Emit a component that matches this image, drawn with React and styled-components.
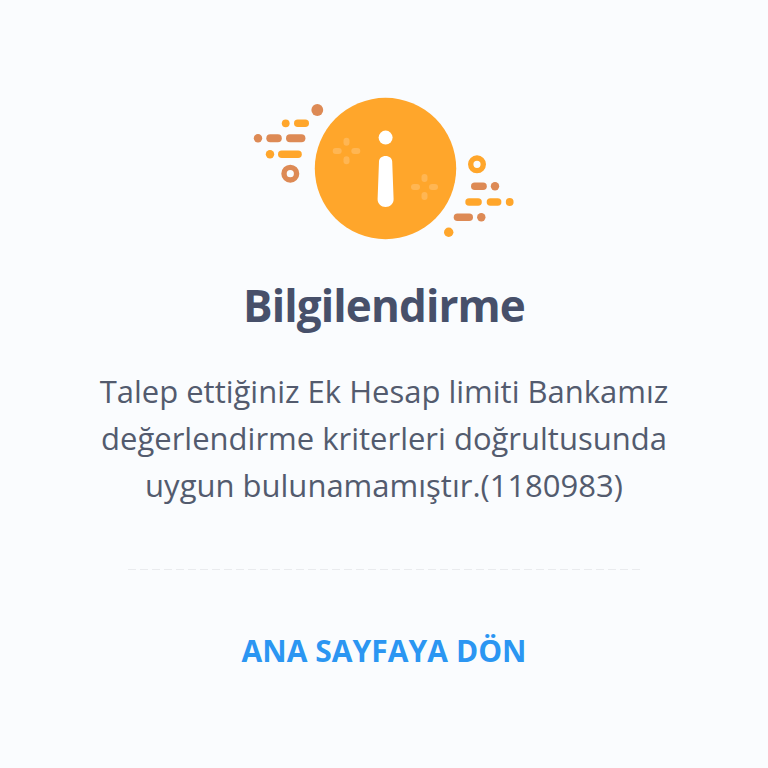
import React from "react";
import styled, { createGlobalStyle } from "styled-components";

const Global = createGlobalStyle`
  html, body { margin: 0; padding: 0; background: #fafcfe; }
  body { font-family: "Open Sans", "Liberation Sans", sans-serif; }
`;
const Page = styled.main`
  width: 768px; height: 768px; overflow: hidden; background: #fafcfe;
  display: flex; flex-direction: column; align-items: center; padding-top: 90px; box-sizing: border-box;
`;
const Illustration = styled.svg`
  display: block; width: 290px; height: 160px; margin-left: 2px; flex: none;
`;
const Title = styled.h1`
  margin: 26px 0 0; font-size: 44px; line-height: 58px; font-weight: 700; letter-spacing: -0.9px; color: #47506a;
`;
const Message = styled.p`
  margin: 34px 0 0; width: 620px; font-size: 31px; line-height: 47px; font-weight: 400; color: #535b6e; text-align: center;
`;
const Divider = styled.hr`
  width: 512px; height: 1px; margin: 60px 0 0; border: 0;
  background: repeating-linear-gradient(to right, #e9ebee 0 8px, transparent 8px 12px);
`;
const Action = styled.button`
  margin-top: 58px; padding: 0; border: 0; background: none; font: 700 30px/46px "Open Sans", sans-serif; color: #2b96f2; letter-spacing: 0.05px;
`;

const BROWN = "#dd8a55", ORANGE = "#ffa62b", SOFT = "#ffb653";
const Pill = ({ x1, x2, y, h = 7.5, c }) => <rect x={x1 - 240} y={y - 90 - h / 2} width={x2 - x1} height={h} rx={h / 2} fill={c} />;
const Dot = ({ x, y, r = 4, c }) => <circle cx={x - 240} cy={y - 90} r={r} fill={c} />;
const Ring = ({ x, y, c }) => <circle cx={x - 240} cy={y - 90} r={6.3} fill="none" stroke={c} strokeWidth={5.4} />;
const Sparkle = ({ x, y, off }) => (
  <g fill={SOFT}>
    <rect x={x - 240 - 3} y={y - 90 - off - 4} width={6} height={8} rx={3} />
    <rect x={x - 240 - 3} y={y - 90 + off - 4} width={6} height={8} rx={3} />
    <rect x={x - 240 - off - 4.5} y={y - 90 - 3} width={9} height={6} rx={3} />
    <rect x={x - 240 + off - 4.5} y={y - 90 - 3} width={9} height={6} rx={3} />
  </g>
);

export default function App() {
  return (
    <Page>
      <Global />
      <Illustration viewBox="0 0 290 160" aria-hidden="true">
        <circle cx="145.5" cy="78.5" r="70.7" fill={ORANGE} />
        <Sparkle x={346.5} y={151} off={9.3} />
        <Sparkle x={424.5} y={187} off={9} />
        <circle cx="145.6" cy="47.6" r="7" fill="#fff" />
        <path d="M145.6 66 c3.8 0 6.4 2.4 6.6 5.4 l1.4 37.6 c0.2 4.6 -3.6 8 -8 8 s-8.2 -3.4 -8 -8 l1.4 -37.6 c0.2 -3 2.8 -5.4 6.6 -5.4z" fill="#fff" />

        <Dot x={317.3} y={110} r={5.9} c={BROWN} />
        <Dot x={285.7} y={123.3} r={3.9} c={ORANGE} />
        <Pill x1={294} x2={309} y={123.3} c={ORANGE} />
        <Dot x={258} y={138.3} r={4.2} c={BROWN} />
        <Pill x1={266.3} x2={281.8} y={138.3} h={8} c={BROWN} />
        <Pill x1={286} x2={305.4} y={138.3} h={8} c={BROWN} />
        <Dot x={270} y={154.3} r={4.2} c={ORANGE} />
        <Pill x1={278} x2={301.8} y={154.3} c={ORANGE} />
        <Ring x={290.3} y={173.7} c={BROWN} />

        <Ring x={477} y={164.3} c={ORANGE} />
        <Pill x1={471} x2={486.8} y={186.3} c={BROWN} />
        <Dot x={495} y={186.3} r={4.2} c={BROWN} />
        <Pill x1={465.3} x2={481.8} y={202} c={ORANGE} />
        <Pill x1={486.7} x2={501.4} y={202} c={ORANGE} />
        <Dot x={509.7} y={202} r={3.9} c={ORANGE} />
        <Pill x1={453.7} x2={473} y={217.3} c={BROWN} />
        <Dot x={481.3} y={217.3} r={4.2} c={BROWN} />
        <Dot x={448.7} y={232.3} r={4.7} c={ORANGE} />
      </Illustration>
      <Title>Bilgilendirme</Title>
      <Message>
        Talep ettiğiniz Ek Hesap limiti Bankamız değerlendirme kriterleri doğrultusunda uygun bulunamamıştır.(1180983)
      </Message>
      <Divider />
      <Action>ANA SAYFAYA DÖN</Action>
    </Page>
  );
}
